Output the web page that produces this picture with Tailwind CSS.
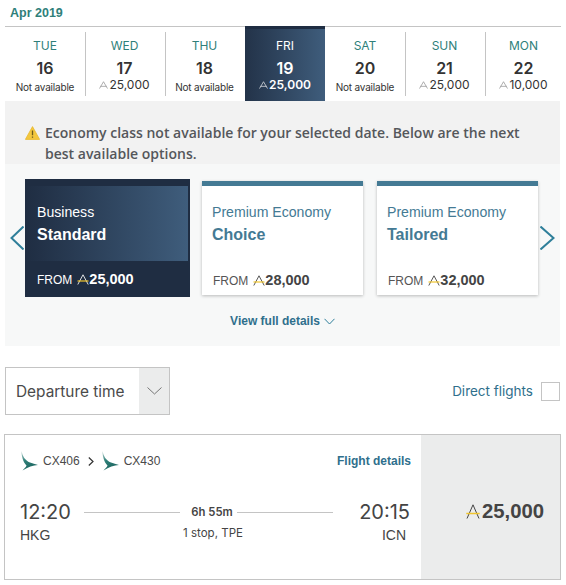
<!doctype html>
<html lang="en">
  <head>
    <meta charset="UTF-8" />
    <title>Select flight</title>
    <script src="https://cdn.jsdelivr.net/npm/@tailwindcss/browser@4"></script>
  </head>
  <body>
    <div class="w-[566px] h-[585px] overflow-hidden bg-white font-['Liberation_Sans',sans-serif] text-[#444]">
      <div class="h-[26px] pl-[10px] flex items-center text-[12.5px] font-bold text-[#2f7f7a]">Apr 2019</div>

      <!-- dates -->
      <div class="ml-[5px] w-[556px] h-[75px] border-t border-[#c4c4c4] flex font-['Inter',sans-serif] text-[#333]">
        <div class="w-[81px] my-[5px] border-r border-[#c4c4c4] flex flex-col items-center">
          <span class="mt-[7px] text-[12px] leading-[14px] text-[#2f7f7a]">TUE</span>
          <span class="mt-[6px] text-[16px] leading-[18px] font-semibold">16</span>
          <span class="mt-[3px] text-[10px] leading-[14px] tracking-[-0.2px]">Not available</span>
        </div>
        <div class="w-[80px] my-[5px] pr-[2px] border-r border-[#c4c4c4] flex flex-col items-center">
          <span class="mt-[7px] text-[12px] leading-[14px] text-[#2f7f7a]">WED</span>
          <span class="mt-[6px] text-[16px] leading-[18px] font-semibold">17</span>
          <span class="mt-[1px] text-[12px] leading-[14px] flex items-center">
            <svg class="w-[9px] h-[8px] mr-[1px]" viewBox="0 0 10 9" fill="none" stroke="#9a9a9a" stroke-width="0.9"><path d="M0.5 8.500 5 0.800 9.500 8.500M1.500 6h7" /></svg>25,000
          </span>
        </div>
        <div class="w-[79px] pr-[2px] flex flex-col items-center">
          <span class="mt-[12px] text-[12px] leading-[14px] text-[#2f7f7a]">THU</span>
          <span class="mt-[6px] text-[16px] leading-[18px] font-semibold">18</span>
          <span class="mt-[3px] text-[10px] leading-[14px] tracking-[-0.2px]">Not available</span>
        </div>
        <div class="w-[80px] -mt-px border-t-[3px] border-[#1f2d42] bg-gradient-to-r from-[#233349] to-[#3f5d7c] text-white flex flex-col items-center">
          <span class="mt-[10px] text-[12px] leading-[14px]">FRI</span>
          <span class="mt-[6px] text-[16px] leading-[18px] font-semibold">19</span>
          <span class="mt-[1px] text-[12px] leading-[14px] font-semibold flex items-center">
            <svg class="w-[9px] h-[8px] mr-[1px]" viewBox="0 0 10 9" fill="none" stroke="#d5d9de" stroke-width="0.9"><path d="M0.5 8.500 5 0.800 9.500 8.500M1.500 6h7" /></svg>25,000
          </span>
        </div>
        <div class="w-[81px] my-[5px] border-r border-[#c4c4c4] flex flex-col items-center">
          <span class="mt-[7px] text-[12px] leading-[14px] text-[#2f7f7a]">SAT</span>
          <span class="mt-[6px] text-[16px] leading-[18px] font-semibold">20</span>
          <span class="mt-[3px] text-[10px] leading-[14px] tracking-[-0.2px]">Not available</span>
        </div>
        <div class="w-[80px] my-[5px] pr-[2px] border-r border-[#c4c4c4] flex flex-col items-center">
          <span class="mt-[7px] text-[12px] leading-[14px] text-[#2f7f7a]">SUN</span>
          <span class="mt-[6px] text-[16px] leading-[18px] font-semibold">21</span>
          <span class="mt-[1px] text-[12px] leading-[14px] flex items-center">
            <svg class="w-[9px] h-[8px] mr-[1px]" viewBox="0 0 10 9" fill="none" stroke="#9a9a9a" stroke-width="0.9"><path d="M0.5 8.500 5 0.800 9.500 8.500M1.500 6h7" /></svg>25,000
          </span>
        </div>
        <div class="w-[75px] my-[5px] flex flex-col items-center">
          <span class="mt-[7px] text-[12px] leading-[14px] text-[#2f7f7a]">MON</span>
          <span class="mt-[6px] text-[16px] leading-[18px] font-semibold">22</span>
          <span class="mt-[1px] text-[12px] leading-[14px] flex items-center">
            <svg class="w-[9px] h-[8px] mr-[1px]" viewBox="0 0 10 9" fill="none" stroke="#9a9a9a" stroke-width="0.9"><path d="M0.5 8.500 5 0.800 9.500 8.500M1.500 6h7" /></svg>10,000
          </span>
        </div>
      </div>

      <!-- notice + options -->
      <div class="ml-[5px] w-[555px] h-[245px] bg-[#f7f8f8]">
        <div class="h-[63px] bg-[#f2f2f2] pl-[20px] pt-[21px] flex">
          <svg class="w-[15px] h-[14px] mt-[4px] mr-[5px] shrink-0" viewBox="0 0 15 14"><path d="M7.500 0.600 14.600 13.400H0.400Z" fill="#f3c73e" stroke="#e9b92c" stroke-width="0.8" stroke-linejoin="round" /><path d="M7.500 4.500v4.800M7.500 10.500v1.300" stroke="#6b5a1d" stroke-width="1.300" /></svg>
          <p class="w-[490px] text-[14px] leading-[21px] font-semibold text-[#55575b] font-['Open_Sans',sans-serif]">Economy class not available for your selected date. Below are the next best available options.</p>
        </div>

        <div class="mt-[15px] flex items-center h-[118px]">
          <div class="w-[20px] flex justify-end pr-[1px]">
            <svg class="w-[14px] h-[24px]" viewBox="0 0 14 24" fill="none" stroke="#2f7f9a" stroke-width="2"><path d="M13.500 0.500 1.500 12l12 11.500" /></svg>
          </div>
          <div class="w-[165px] h-[118px] bg-[#1f2d42] text-white flex flex-col">
            <div class="mt-[7px] h-[75px] mr-[2px] bg-gradient-to-r from-[#1f2d42] to-[#3f5d7c] pl-[12px] pt-[17px]">
              <div class="text-[14.100px] leading-[18px]">Business</div>
              <div class="mt-[4px] text-[16px] leading-[19px] font-bold">Standard</div>
            </div>
            <div class="pl-[12px] mt-[8px] flex items-center text-[12px]">
              FROM
              <svg class="w-[12px] h-[11px] ml-[5px]" viewBox="0 0 12 11" fill="none"><path d="M0.800 10.500 6 0.800l5.200 9.700" stroke="#f2f2f2" stroke-width="0.9" /><path d="M0.500 7h11" stroke="#f0c52e" stroke-width="1.200" /></svg>
              <span class="text-[14.500px] font-bold">25,000</span>
            </div>
          </div>
          <div class="ml-[12px] w-[161px] h-[114px] bg-white border-t-[5px] border-[#447a94] shadow-[0_1px_3px_rgba(0,0,0,0.25)] flex flex-col">
            <div class="pl-[10px] pt-[17px] text-[#447a94]">
              <div class="text-[14.100px] leading-[18px]">Premium Economy</div>
              <div class="mt-[4px] text-[16px] leading-[19px] font-bold">Choice</div>
            </div>
            <div class="pl-[11px] mt-[26px] flex items-center text-[12px]">
              <span class="text-[#555]">FROM</span>
              <svg class="w-[12px] h-[11px] ml-[5px]" viewBox="0 0 12 11" fill="none"><path d="M0.800 10.500 6 0.800l5.200 9.700" stroke="#444" stroke-width="0.9" /><path d="M0.500 7h11" stroke="#f0c52e" stroke-width="1.200" /></svg>
              <span class="text-[14.500px] font-bold">28,000</span>
            </div>
          </div>
          <div class="ml-[14px] w-[161px] h-[114px] bg-white border-t-[5px] border-[#447a94] shadow-[0_1px_3px_rgba(0,0,0,0.25)] flex flex-col">
            <div class="pl-[10px] pt-[17px] text-[#447a94]">
              <div class="text-[14.100px] leading-[18px]">Premium Economy</div>
              <div class="mt-[4px] text-[16px] leading-[19px] font-bold">Tailored</div>
            </div>
            <div class="pl-[11px] mt-[26px] flex items-center text-[12px]">
              <span class="text-[#555]">FROM</span>
              <svg class="w-[12px] h-[11px] ml-[5px]" viewBox="0 0 12 11" fill="none"><path d="M0.800 10.500 6 0.800l5.200 9.700" stroke="#444" stroke-width="0.9" /><path d="M0.500 7h11" stroke="#f0c52e" stroke-width="1.200" /></svg>
              <span class="text-[14.500px] font-bold">32,000</span>
            </div>
          </div>
          <svg class="ml-[2px] w-[15px] h-[24px]" viewBox="0 0 15 24" fill="none" stroke="#2f7f9a" stroke-width="2"><path d="M0.500 0.500 13.500 12 0.500 23.500" /></svg>
        </div>

        <div class="mt-[16px] flex justify-center items-center text-[12px] leading-[16px] font-bold text-[#2f6f8c]">
          View full details
          <svg class="w-[11px] h-[7px] ml-[4px]" viewBox="0 0 11 7" fill="none" stroke="#2f7f9a"><path d="M0.500 0.800 5.500 6l5-5.200" /></svg>
        </div>
      </div>

      <!-- filters -->
      <div class="mt-[21px] ml-[5px] w-[555px] flex items-center justify-between">
        <div class="w-[165px] h-[48px] border border-[#c4c4c4] flex items-center justify-between">
          <span class="pl-[10px] pt-px text-[15.400px] text-[#4a4a4a] font-['Inter',sans-serif]">Departure time</span>
          <span class="w-[30px] h-full bg-[#ebecec] flex items-center justify-center">
            <svg class="w-[15px] h-[8px]" viewBox="0 0 15 8" fill="none" stroke="#777"><path d="M0.500 0.500 7.500 7l7-6.500" /></svg>
          </span>
        </div>
        <div class="flex items-center">
          <span class="text-[13.500px] text-[#2f6f8c] font-['Inter',sans-serif]">Direct flights</span>
          <span class="ml-[8px] w-[19px] h-[19px] bg-white border border-[#c4c4c4]"></span>
        </div>
      </div>

      <!-- flight -->
      <div class="mt-[19px] ml-[4px] w-[557px] h-[146px] border border-[#c4c4c4] flex">
        <div class="w-[416px] pl-[16px] pr-[10px] pt-[16px] flex flex-col">
          <div class="flex items-center justify-between h-[20px]">
            <div class="flex items-center text-[12px] text-[#4a4a4a]">
              <svg class="w-[17px] h-[20px] mr-[5px]" viewBox="0 0 17 20">
                <defs>
                  <linearGradient id="wing" x1="0" y1="0" x2="0.4" y2="1">
                    <stop offset="0" stop-color="#b9d3d0" />
                    <stop offset="0.5" stop-color="#2f7f78" />
                    <stop offset="1" stop-color="#1d6660" />
                  </linearGradient>
                </defs>
                <path d="M0.500 0C1.500 5 4 9.500 9 11.500C11.500 12.500 14 13.300 17 14C12 14.300 7 16 1.500 19.500C3.500 17.500 5 16 5.500 14.500C2 11 0.500 5 0.500 0Z" fill="url(#wing)" />
              </svg>
              CX406
              <svg class="w-[6px] h-[9px] mx-[8px]" viewBox="0 0 6 9" fill="none" stroke="#333" stroke-width="1.200"><path d="M0.800 0.500 5 4.500 0.800 8.500" /></svg>
              <svg class="w-[17px] h-[20px] mr-[5px]" viewBox="0 0 17 20"><path d="M0.500 0C1.500 5 4 9.500 9 11.500C11.500 12.500 14 13.300 17 14C12 14.300 7 16 1.500 19.500C3.500 17.500 5 16 5.500 14.500C2 11 0.500 5 0.500 0Z" fill="url(#wing)" /></svg>
              CX430
            </div>
            <span class="text-[12px] font-bold text-[#2f6f8c]">Flight details</span>
          </div>
          <div class="mt-[29px] flex">
            <div class="w-[63px]">
              <div class="-ml-px text-[20px] leading-[24px] font-['Inter',sans-serif]">12:20</div>
              <div class="mt-[3px] text-[14px] leading-[17px] -ml-px">HKG</div>
            </div>
            <div class="flex-1 flex flex-col">
              <div class="h-[24px] flex items-center">
                <span class="flex-1 h-px bg-[#c4c4c4]"></span>
                <span class="pl-[11px] pr-[4px] text-[11.300px] font-semibold font-['Inter',sans-serif]">6h 55m</span>
                <span class="flex-1 h-px bg-[#c4c4c4]"></span>
              </div>
              <div class="mt-px pl-[9px] text-center text-[11.500px] leading-[17px] font-['Inter',sans-serif]">1 stop, TPE</div>
            </div>
            <div class="w-[78px] pr-px text-right">
              <div class="text-[20px] leading-[24px] font-['Inter',sans-serif]">20:15</div>
              <div class="mt-[3px] text-[14px] leading-[17px] pr-[4px]">ICN</div>
            </div>
          </div>
        </div>
        <div class="flex-1 bg-[#ebecec] flex items-center justify-center pl-[29px] pt-[8px]">
          <svg class="w-[14px] h-[15px] mr-[2px]" viewBox="0 0 14 15" fill="none"><path d="M1 14.500 7 0.800l6 13.700" stroke="#444" stroke-width="1" /><path d="M0.300 9.500h13.400" stroke="#f0c52e" stroke-width="1.500" /></svg>
          <span class="text-[20.300px] font-bold">25,000</span>
        </div>
      </div>
    </div>
  </body>
</html>
